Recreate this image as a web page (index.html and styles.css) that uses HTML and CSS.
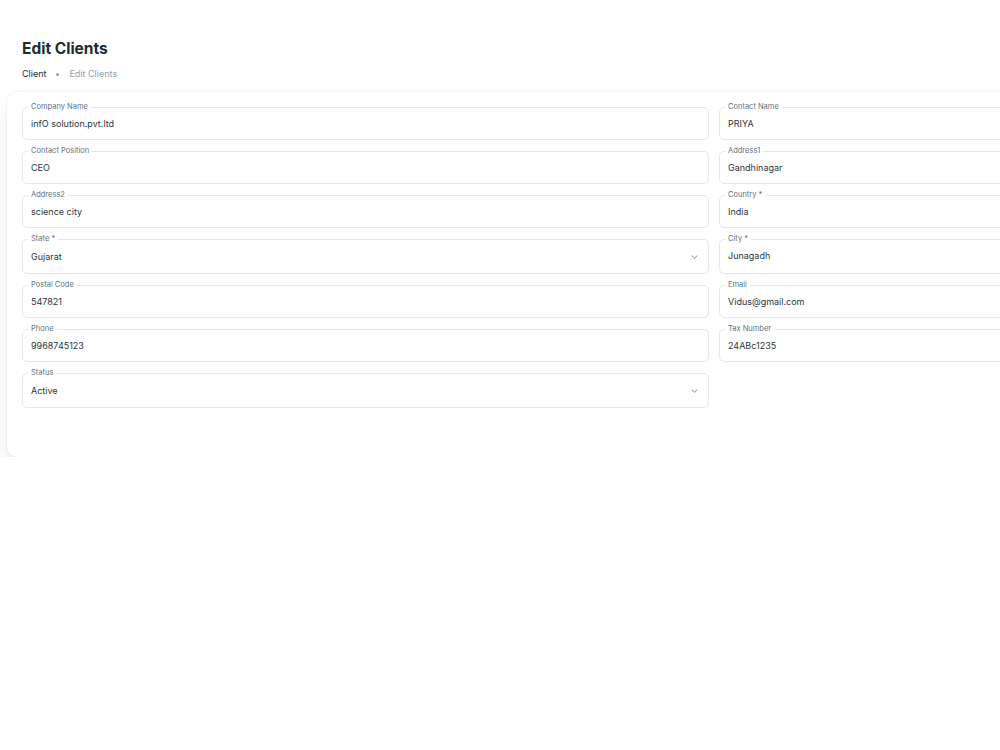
FILE: index.html
```html
<!DOCTYPE html>
<html lang="en">
<head>
    <meta charset="UTF-8">
    <meta name="viewport" content="width=device-width, initial-scale=1.0">
    <title>Edit Clients</title>
    <link rel="stylesheet" href="styles.css">
</head>
<body>

    <div class="page">
        <div class="page-header">
            <h1>Edit Clients</h1>
            <div class="breadcrumbs">
                <span class="crumb">Client</span>
                <span class="crumb-dot"></span>
                <span class="crumb current">Edit Clients</span>
            </div>
        </div>

        <div class="card">
            <form class="client-form">
                <fieldset class="field">
                    <legend>Company Name</legend>
                    <div class="value">infO solution.pvt.ltd</div>
                </fieldset>
                <fieldset class="field">
                    <legend>Contact Name</legend>
                    <div class="value">PRIYA</div>
                </fieldset>

                <fieldset class="field">
                    <legend>Contact Position</legend>
                    <div class="value">CEO</div>
                </fieldset>
                <fieldset class="field">
                    <legend>Address1</legend>
                    <div class="value">Gandhinagar</div>
                </fieldset>

                <fieldset class="field">
                    <legend>Address2</legend>
                    <div class="value">science city</div>
                </fieldset>
                <fieldset class="field">
                    <legend>Country *</legend>
                    <div class="value">India</div>
                </fieldset>

                <fieldset class="field select">
                    <legend>State *</legend>
                    <div class="value">Gujarat
                        <svg class="chevron" viewBox="0 0 7 4" width="7" height="4"><path d="M1 0.8l2.5 2.4 2.5-2.4" fill="none" stroke="#637381" stroke-width="0.9" stroke-linecap="round" stroke-linejoin="round"/></svg>
                    </div>
                </fieldset>
                <fieldset class="field">
                    <legend>City *</legend>
                    <div class="value">Junagadh</div>
                </fieldset>

                <fieldset class="field">
                    <legend>Postal Code</legend>
                    <div class="value">547821</div>
                </fieldset>
                <fieldset class="field">
                    <legend>Email</legend>
                    <div class="value">Vidus@gmail.com</div>
                </fieldset>

                <fieldset class="field">
                    <legend>Phone</legend>
                    <div class="value">9968745123</div>
                </fieldset>
                <fieldset class="field">
                    <legend>Tax Number</legend>
                    <div class="value">24ABc1235</div>
                </fieldset>

                <fieldset class="field select">
                    <legend>Status</legend>
                    <div class="value">Active
                        <svg class="chevron" viewBox="0 0 7 4" width="7" height="4"><path d="M1 0.8l2.5 2.4 2.5-2.4" fill="none" stroke="#637381" stroke-width="0.9" stroke-linecap="round" stroke-linejoin="round"/></svg>
                    </div>
                </fieldset>
            </form>
        </div>
    </div>

</body>
</html>
```

FILE: styles.css
```css
html, body {
    overflow: hidden;
}
body {
    font-family: "Inter", "Liberation Sans", sans-serif;
    background-color: #fff;
    color: #212B36;
    margin: 0;
}
.page {
    width: 1414px;
    padding: 39px 0 0 7px;
}
.page-header {
    padding-left: 15px;
}
h1 {
    margin: 0;
    font-size: 15.5px;
    line-height: 20px;
    font-weight: 700;
    color: #212B36;
}
.breadcrumbs {
    display: flex;
    align-items: center;
    gap: 10px;
    margin-top: 9px;
    font-size: 9px;
    line-height: 12px;
}
.crumb {
    color: #212B36;
}
.crumb.current {
    color: #919EAB;
}
.crumb-dot {
    width: 3px;
    height: 3px;
    border-radius: 50%;
    background-color: #919EAB;
}
.card {
    margin-top: 12px;
    background-color: #fff;
    border-radius: 10px;
    padding: 11px 15px 49px;
    box-shadow: 0 0 2px 0 rgba(145, 158, 171, 0.28), 0 10px 18px -4px rgba(145, 158, 171, 0.3);
}
.client-form {
    display: grid;
    grid-template-columns: 687px 687px;
    column-gap: 10px;
    row-gap: 7px;
}
.field {
    margin: 0;
    min-width: 0;
    border: 1px solid #e5e8eb;
    border-radius: 5px;
    padding: 0 10px 0 5px;
}
.field legend {
    font-size: 7.5px;
    line-height: 8px;
    color: #637381;
    padding: 0 3px;
}
.value {
    display: flex;
    align-items: center;
    justify-content: space-between;
    padding: 6px 0 8px 3px;
    font-size: 9px;
    line-height: 14px;
    color: #2b3540;
}
.select .value {
    padding-top: 7px;
    padding-bottom: 9px;
}
.chevron {
    display: block;
}
```
